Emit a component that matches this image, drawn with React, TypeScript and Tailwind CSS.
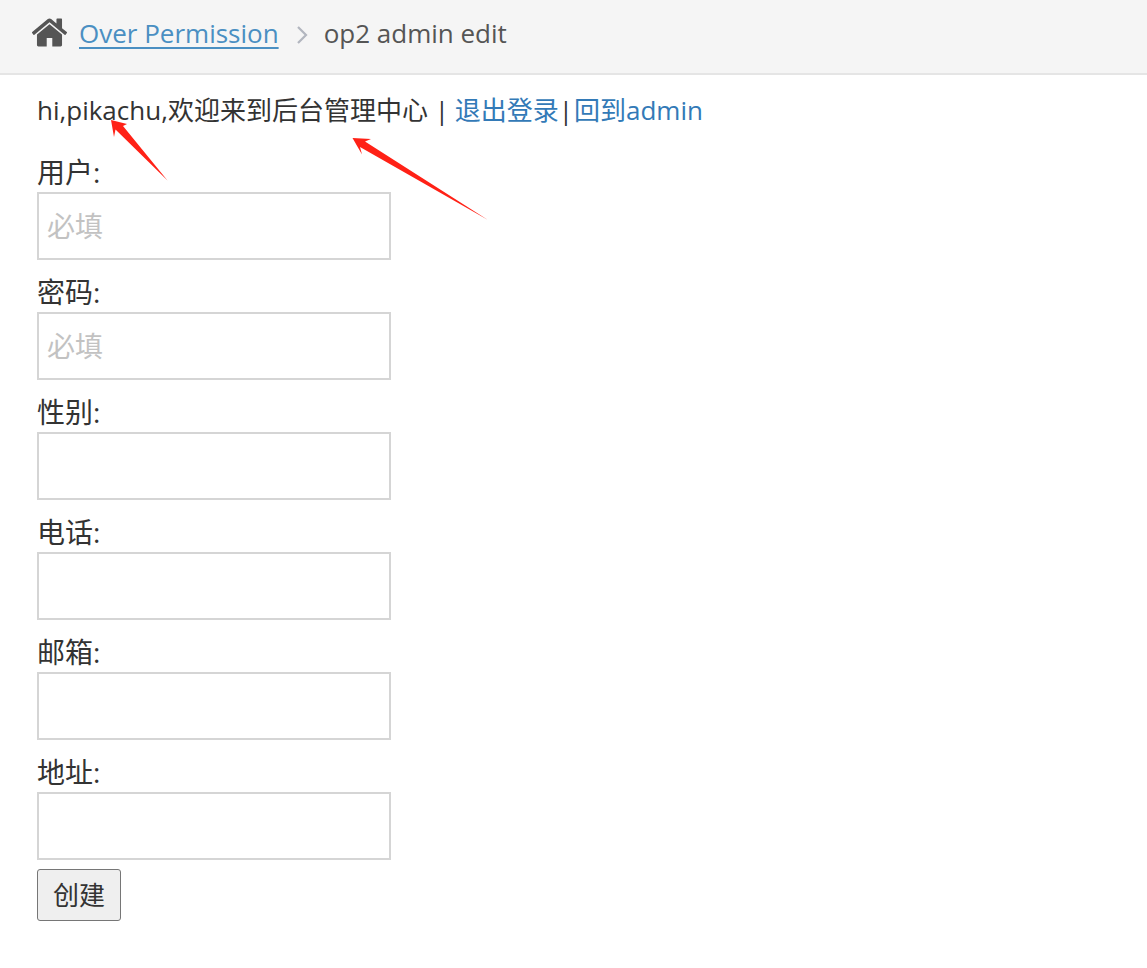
const font = "font-['Open_Sans','Noto_Sans_CJK_SC',sans-serif]";

const fields = [
  { label: "用户:", placeholder: "必填" },
  { label: "密码:", placeholder: "必填" },
  { label: "性别:", placeholder: "" },
  { label: "电话:", placeholder: "" },
  { label: "邮箱:", placeholder: "" },
  { label: "地址:", placeholder: "" },
];

const HomeIcon = () => (
  <svg viewBox="0 0 1792 1792" className="w-[39px] h-[39px] mb-[2px] shrink-0 fill-[#555555]">
    <path d="M1472 992v480q0 26-19 45t-45 19h-384v-384h-256v384h-384q-26 0-45-19t-19-45v-480q0-1 .5-3t.5-3l575-474 575 474q1 2 1 6zm223-69l-62 74q-8 9-21 11h-3q-13 0-21-7l-692-577-692 577q-12 8-24 7-13-2-21-11l-62-74q-8-10-7-23.5t11-21.5l719-599q32-26 76-26t76 26l244 204v-195q0-14 9-23t23-9h192q14 0 23 9t9 23v408l219 182q10 8 11 21.5t-7 23.5z" />
  </svg>
);

const Arrows = () => (
  <svg className="absolute left-0 top-0 pointer-events-none" width="520" height="240" viewBox="0 0 520 240">
    <polygon points="111,120 127,124 123,126 167.5,180.5 115.5,129.5 114,137" fill="#ff2116" />
    <polygon points="352.5,138 371,139 365,141.5 488,220 360,147 362,154.5" fill="#ff2116" />
  </svg>
);

export default function App() {
  return (
    <div className={`relative min-h-[968px] bg-white text-[26px] leading-[37px] text-[#333333] ${font}`}>
      <div className="flex items-center h-[75px] pl-[30px] pb-[6px] bg-[#f5f5f5] border-b-2 border-[#e5e5e5]">
        <HomeIcon />
        <a href="#" className="ml-[10px] underline underline-offset-[4px] text-[#4a8fc2]">Over Permission</a>
        <svg viewBox="0 0 12 20" className="ml-[17px] mt-[3px] w-[12px] h-[20px] fill-none stroke-[#b2b6bf] stroke-[2.2]">
          <path d="M2 2l8 8-8 8" />
        </svg>
        <span className="ml-[16px] text-[#555555]">op2 admin edit</span>
      </div>

      <div className="pl-[37px] pt-[17px]">
        <p>
          hi,pikachu,欢迎来到后台管理中心 | <a href="#" className="-ml-px text-[#337ab7]">退出登录</a>|<a href="#" className="ml-px text-[#337ab7]">回到admin</a>
        </p>

        <form className="mt-[11px]">
          {fields.map((f) => (
            <div key={f.label} className="h-[120px] pt-[14px]">
              <label className="block h-[38px] text-[28px]">{f.label}</label>
              <input
                placeholder={f.placeholder}
                className="block w-[354px] h-[68px] px-[8px] text-[28px] border-2 border-[#d5d5d5] bg-white outline-none placeholder:text-[#c2c2c2]"
              />
            </div>
          ))}
          <button
            type="button"
            className="block mt-[9px] w-[84px] h-[52px] rounded-[3px] border border-[#767676] bg-[#efefef] text-center"
          >
            创建
          </button>
        </form>
      </div>

      <Arrows />
    </div>
  );
}
